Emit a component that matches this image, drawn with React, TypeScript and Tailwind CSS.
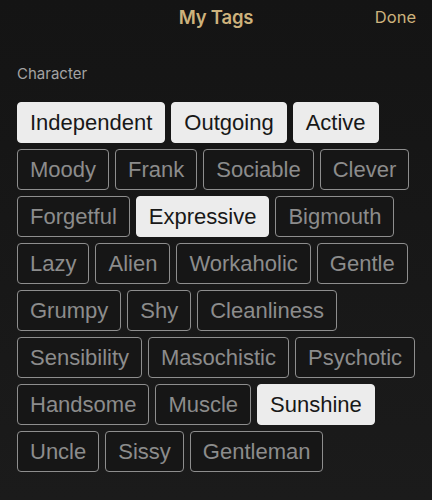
import { useState } from 'react';

const tags = [
  'Independent', 'Outgoing', 'Active', 'Moody', 'Frank', 'Sociable', 'Clever',
  'Forgetful', 'Expressive', 'Bigmouth', 'Lazy', 'Alien', 'Workaholic', 'Gentle',
  'Grumpy', 'Shy', 'Cleanliness', 'Sensibility', 'Masochistic', 'Psychotic',
  'Handsome', 'Muscle', 'Sunshine', 'Uncle', 'Sissy', 'Gentleman',
];

const initial = ['Independent', 'Outgoing', 'Active', 'Expressive', 'Sunshine'];

export default function App() {
  const [selected, setSelected] = useState<string[]>(initial);

  const toggle = (t: string) =>
    setSelected((s) => (s.includes(t) ? s.filter((x) => x !== t) : [...s, t]));

  return (
    <div className="min-h-[500px] w-[432px] bg-gradient-to-b from-[#141414] to-[#1b1b1b] font-['Liberation_Sans',Arial,sans-serif]">
      <header className="grid h-[35px] grid-cols-[1fr_auto_1fr] items-center px-[16px]">
        <span />
        <h1 className="font-['Inter',sans-serif] text-[18.5px] font-semibold tracking-[-0.2px] text-[#cdb27c]">
          My Tags
        </h1>
        <button className="justify-self-end font-['Inter',sans-serif] text-[16.5px] text-[#cdb27c]">
          Done
        </button>
      </header>

      <section className="pl-[17px] pr-[12px] pt-[29px]">
        <h2 className="font-['Inter',sans-serif] text-[15px] leading-[20px] text-[#a3a3a3]">Character</h2>
        <div className="mt-[18px] flex flex-wrap gap-[6px]">
          {tags.map((t) => {
            const on = selected.includes(t);
            return (
              <button
                key={t}
                onClick={() => toggle(t)}
                className={
                  on
                    ? 'h-[41px] rounded-[4px] border border-[#ececec] bg-[#ececec] px-[12px] text-[22px] leading-none text-[#181818]'
                    : 'h-[41px] rounded-[4px] border border-[#8e8e8e] bg-[#161616] px-[12px] text-[22px] leading-none text-[#8c8c8c]'
                }
              >
                {t}
              </button>
            );
          })}
        </div>
      </section>
    </div>
  );
}
